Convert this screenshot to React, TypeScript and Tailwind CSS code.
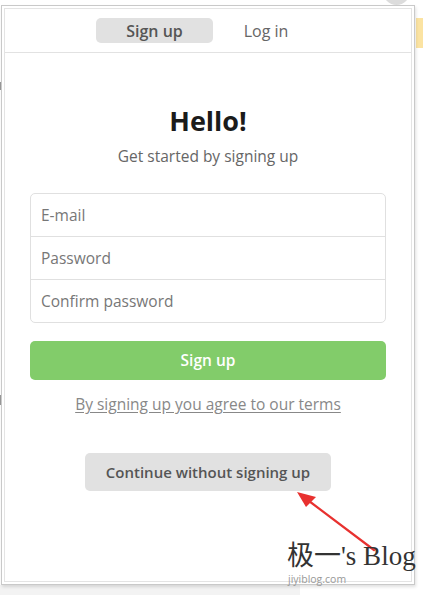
import React from 'react';

const font = { fontFamily: "'Open Sans', 'Noto Sans', sans-serif" };

export default function App() {
    return (
        <div className="relative w-[423px] h-[595px] overflow-hidden bg-white" style={font}>
            {/* bits of the page behind the popup */}
            <div className="absolute right-[13px] top-[-22px] h-[27px] w-[27px] rounded-full bg-[#dcdcdc]" />
            <div className="absolute right-0 top-[18px] h-[30px] w-[7px] bg-[#fbe3a2]" />
            <div className="absolute left-0 top-[82px] h-[8px] w-[2px] bg-[#9a9a9a]" />
            <div className="absolute left-0 top-[395px] h-[10px] w-[2px] bg-[#9a9a9a]" />
            <div className="absolute left-0 bottom-0 h-[10px] w-[300px] bg-[#f3f3f3]" />

            {/* popup */}
            <div className="relative ml-[1px] mt-[5px] h-[580px] w-[414px] border border-[#c9c9c9] bg-white p-[2px] shadow-[1px_2px_3px_rgba(0,0,0,0.12)]">
                <div className="flex h-full flex-col border border-[#e4e4e4]">
                    {/* tabs */}
                    <div className="flex h-[44px] shrink-0 items-center border-b border-[#e2e2e2] pl-[91px]">
                        <button
                            type="button"
                            className="h-[25px] w-[117px] rounded-[5px] bg-[#e1e1e1] text-[16px] font-semibold text-[#555]"
                        >
                            Sign up
                        </button>
                        <button type="button" className="ml-[9px] h-[25px] w-[88px] text-[16px] text-[#666]">
                            Log in
                        </button>
                    </div>

                    <div className="flex flex-col items-center px-[25px]">
                        <h1 className="mt-[52px] text-[27px] font-bold leading-[32px] text-[#1b1b1b]">Hello!</h1>
                        <p className="mt-[9px] text-[15.5px] leading-[20px] text-[#666]">Get started by signing up</p>

                        {/* inputs */}
                        <div className="mt-[27px] flex w-full flex-col rounded-[5px] border border-[#e0e0e0]">
                            <input
                                placeholder="E-mail"
                                className="h-[42px] w-full rounded-t-[5px] px-[10px] text-[15.5px] text-[#333] placeholder-[#777] outline-none"
                            />
                            <input
                                type="password"
                                placeholder="Password"
                                className="h-[43px] w-full border-t border-[#e0e0e0] px-[10px] text-[15.5px] text-[#333] placeholder-[#777] outline-none"
                            />
                            <input
                                type="password"
                                placeholder="Confirm password"
                                className="h-[43px] w-full rounded-b-[5px] border-t border-[#e0e0e0] px-[10px] text-[15.5px] text-[#333] placeholder-[#777] outline-none"
                            />
                        </div>

                        <button
                            type="button"
                            className="mt-[18px] h-[39px] w-full rounded-[5px] bg-[#82cc6a] text-[15.5px] font-semibold text-white"
                        >
                            Sign up
                        </button>

                        <a href="#" className="mt-[14px] text-[15.5px] leading-[20px] text-[#888] underline underline-offset-2">
                            By signing up you agree to our terms
                        </a>

                        <button
                            type="button"
                            className="mt-[39px] h-[38px] w-[246px] rounded-[5px] bg-[#e1e1e1] text-[15px] font-semibold text-[#555]"
                        >
                            Continue without signing up
                        </button>
                    </div>
                </div>
            </div>

            {/* annotation arrow */}
            <svg className="absolute left-0 top-0" width="423" height="595" viewBox="0 0 423 595">
                <line x1="374" y1="550" x2="305" y2="498" stroke="#e8312f" strokeWidth="2.2" strokeLinecap="round" />
                <polygon points="297,492 316,497 306,507" fill="#e8312f" />
            </svg>

            {/* watermark */}
            <div
                className="absolute left-[287px] top-[540px] text-[27px] leading-[32px] text-[#333]"
                style={{ fontFamily: "'Liberation Serif', 'Noto Sans CJK SC', serif" }}
            >
                极一's Blog
            </div>
            <div className="absolute left-[288px] top-[573px] text-[10.5px] leading-[12px] text-[#999]">jiyiblog.com</div>
        </div>
    );
}
